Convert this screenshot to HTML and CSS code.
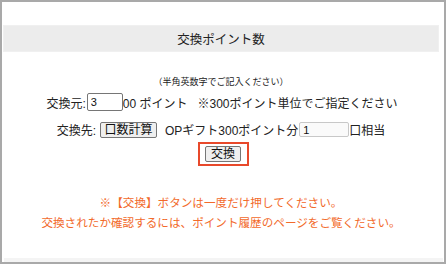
FILE: index.html
```html
<!DOCTYPE html>
<html lang="ja">
<head>
<meta charset="utf-8">
<link rel="stylesheet" href="styles.css">
</head>
<body>
<div class="frame">
  <div class="heading">交換ポイント数</div>
  <div class="note">（半角英数字でご記入ください）</div>
  <div class="row row1">
    <span>交換元:</span><input class="num num-from" type="text" value="3"><span>00 ポイント</span><span class="hint">※300ポイント単位でご指定ください</span>
  </div>
  <div class="row row2">
    <span>交換先:</span><button class="btn calc" type="button">口数計算</button><span class="gift">OPギフト300ポイント分</span><input class="num num-to" type="text" value="1"><span>口相当</span>
  </div>
  <div class="submit-wrap">
    <div class="highlight"><button class="btn submit" type="button">交換</button></div>
  </div>
  <div class="warn">
    <p>※【交換】ボタンは一度だけ押してください。</p>
    <p>交換されたか確認するには、ポイント履歴のページをご覧ください。</p>
  </div>
  <div class="foot"></div>
</div>
</body>
</html>
```
FILE: styles.css
```css
* { box-sizing: border-box; }
html, body { margin: 0; padding: 0; background: #fff; }
body {
  font-family: "Liberation Sans", "Noto Sans CJK JP", sans-serif;
  color: #222;
}
.frame {
  width: 446px;
  height: 264px;
  border: 2px solid #a9a9a9;
  padding: 23px 5px 0 1px;
  display: flex;
  flex-direction: column;
  background: #fff;
}
.heading {
  height: 27px;
  background: #ececec;
  border: 1px solid #f0f0f0;
  display: flex;
  align-items: center;
  justify-content: center;
  font-size: 12.5px;
  color: #222;
}
.note {
  margin-top: 24px;
  text-align: center;
  font-size: 9px;
  line-height: 12px;
  color: #222;
}
.row {
  display: flex;
  align-items: center;
  justify-content: center;
  font-size: 12px;
  white-space: nowrap;
}
.row1 { margin-top: 5px; height: 18px; padding-left: 2px; }
.row2 { margin-top: 10px; height: 17px; }
.num {
  font-family: "Liberation Sans", sans-serif;
  font-size: 11px;
  padding: 0 3px;
  border: 1px solid #767676;
  border-radius: 2px;
  background: #fff;
  color: #111;
}
.num-from { width: 36px; height: 18px; margin-left: 1px; }
.num-to { width: 50px; height: 15px; margin-left: 1px; border-color: #c8c8c8; background: #fafafa; }
.hint { margin-left: 10px; }
.btn {
  font-family: "Liberation Sans", "Noto Sans CJK JP", sans-serif;
  font-size: 12px;
  line-height: 12px;
  color: #111;
  background: #efefef;
  border: 1px solid #767676;
  border-radius: 2px;
  padding: 0;
}
.calc { width: 57px; height: 16px; margin-left: 4px; }
.gift { margin-left: 8px; }
.submit-wrap {
  margin-top: 4px;
  display: flex;
  justify-content: center;
  padding-left: 4px;
}
.highlight {
  width: 51px;
  height: 24px;
  border: 2px solid #e8492b;
  display: flex;
  align-items: center;
  justify-content: center;
}
.submit { width: 36px; height: 16px; }
.warn {
  margin-top: 27px;
  text-align: center;
  color: #f26a2b;
  font-size: 11.6px;
  line-height: 20px;
}
.warn p { margin: 0; }
.foot {
  margin-top: auto;
  height: 4px;
  background: #f4f4f4;
  margin-left: 1px;
  margin-right: -4px;
}
```
